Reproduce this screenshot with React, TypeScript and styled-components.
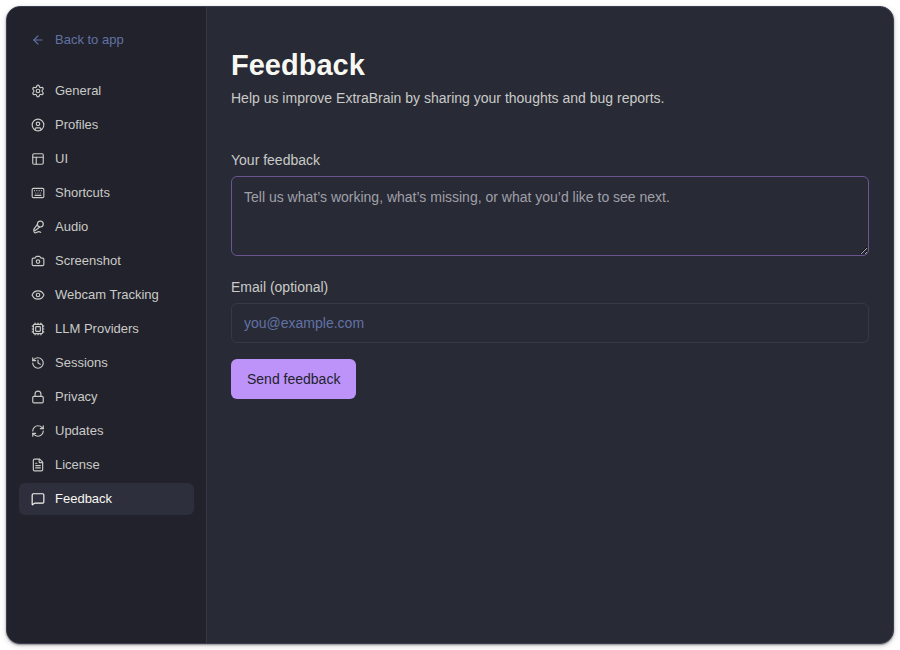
import React from "react";
import styled, { createGlobalStyle } from "styled-components";
import {
  ArrowLeft,
  Camera,
  CircleUser,
  Cpu,
  Eye,
  FileText,
  History,
  Keyboard,
  Lock,
  MessageSquare,
  MicVocal,
  PanelsTopLeft,
  RefreshCw,
  Settings,
  type LucideIcon,
} from "lucide-react";

const GlobalStyle = createGlobalStyle`
  *, *::before, *::after { box-sizing: border-box; }
  body {
    margin: 0;
    background: #ffffff;
    color: #cacac7;
    font-family: "Liberation Sans", Arial, Helvetica, sans-serif;
    font-size: 14px;
    line-height: 20px;
  }
`;

const Page = styled.div`
  display: flex;
  min-height: 100vh;
  padding: 6px;
`;

const Window = styled.div`
  display: flex;
  flex: 1;
  overflow: hidden;
  border: 1px solid #3b3d50;
  border-radius: 14px;
  background: #282a36;
  box-shadow: 0 1px 2px rgba(0, 0, 0, 0.4), 0 2px 6px rgba(0, 0, 0, 0.15);
`;

const Sidebar = styled.aside`
  display: flex;
  flex: none;
  flex-direction: column;
  gap: 19px;
  width: 200px;
  padding: 17px 12px;
  border-right: 1px solid #343746;
  background: #21222c;
`;

const NavList = styled.nav`
  display: flex;
  flex-direction: column;
  gap: 2px;
`;

const NavLink = styled.a<{ $active?: boolean; $muted?: boolean }>`
  display: flex;
  align-items: center;
  gap: 10px;
  height: 32px;
  padding: 0 12px;
  border-radius: 6px;
  background: ${({ $active }) => ($active ? "#2d2f3c" : "transparent")};
  color: ${({ $active, $muted }) => ($active ? "#f8f8f2" : $muted ? "#6272a4" : "#cacac7")};
  font-size: 13px;
  text-decoration: none;

  svg {
    flex: none;
  }
`;

const Main = styled.main`
  display: flex;
  flex: 1;
  flex-direction: column;
  gap: 42px;
  min-width: 0;
  padding: 40px 24px;
`;

const Header = styled.header`
  display: flex;
  flex-direction: column;
  gap: 5px;
`;

const Title = styled.h1`
  margin: 0;
  color: #f8f8f2;
  font-size: 29px;
  font-weight: 700;
  line-height: 36px;
`;

const Subtitle = styled.p`
  margin: 0;
`;

const Form = styled.form`
  display: flex;
  flex-direction: column;
  align-items: flex-start;
  gap: 16px;
`;

const Field = styled.div<{ $spaced?: boolean }>`
  display: flex;
  flex-direction: column;
  gap: 6px;
  width: 100%;
  padding-bottom: ${({ $spaced }) => ($spaced ? "5px" : "0")};
`;

const Label = styled.label`
  color: #cacac7;
`;

const TextArea = styled.textarea`
  display: block;
  width: 100%;
  height: 80px;
  padding: 10px 12px;
  border: 1px solid #6b5591;
  border-radius: 6px;
  outline: none;
  background: transparent;
  color: #f8f8f2;
  font: inherit;
  resize: vertical;

  &::placeholder {
    color: #a0a0a8;
    opacity: 1;
  }
`;

const TextInput = styled.input`
  width: 100%;
  height: 40px;
  padding: 0 12px;
  border: 1px solid #373948;
  border-radius: 6px;
  outline: none;
  background: transparent;
  color: #f8f8f2;
  font: inherit;

  &::placeholder {
    color: #6272a4;
    opacity: 1;
  }
`;

const SubmitButton = styled.button`
  height: 40px;
  padding: 0 16px;
  border: 0;
  border-radius: 6px;
  background: #bd93f9;
  color: #21222c;
  font: inherit;
  cursor: pointer;
`;

const items: { label: string; icon: LucideIcon }[] = [
  { label: "General", icon: Settings },
  { label: "Profiles", icon: CircleUser },
  { label: "UI", icon: PanelsTopLeft },
  { label: "Shortcuts", icon: Keyboard },
  { label: "Audio", icon: MicVocal },
  { label: "Screenshot", icon: Camera },
  { label: "Webcam Tracking", icon: Eye },
  { label: "LLM Providers", icon: Cpu },
  { label: "Sessions", icon: History },
  { label: "Privacy", icon: Lock },
  { label: "Updates", icon: RefreshCw },
  { label: "License", icon: FileText },
  { label: "Feedback", icon: MessageSquare },
];

export default function App() {
  return (
    <>
      <GlobalStyle />
      <Page>
        <Window>
          <Sidebar>
            <NavLink href="#app" $muted>
              <ArrowLeft size={14} />
              Back to app
            </NavLink>
            <NavList aria-label="Settings">
              {items.map(({ label, icon: Icon }) => {
                const active = label === "Feedback";
                return (
                  <NavLink
                    key={label}
                    href={`#${label.toLowerCase().replace(" ", "-")}`}
                    $active={active}
                    aria-current={active ? "page" : undefined}
                  >
                    <Icon size={14} />
                    {label}
                  </NavLink>
                );
              })}
            </NavList>
          </Sidebar>
          <Main>
            <Header>
              <Title>Feedback</Title>
              <Subtitle>Help us improve ExtraBrain by sharing your thoughts and bug reports.</Subtitle>
            </Header>
            <Form onSubmit={(event) => event.preventDefault()}>
              <Field $spaced>
                <Label htmlFor="feedback">Your feedback</Label>
                <TextArea
                  id="feedback"
                  placeholder="Tell us what’s working, what’s missing, or what you’d like to see next."
                />
              </Field>
              <Field>
                <Label htmlFor="email">Email (optional)</Label>
                <TextInput id="email" type="email" placeholder="you@example.com" />
              </Field>
              <SubmitButton type="submit">Send feedback</SubmitButton>
            </Form>
          </Main>
        </Window>
      </Page>
    </>
  );
}
